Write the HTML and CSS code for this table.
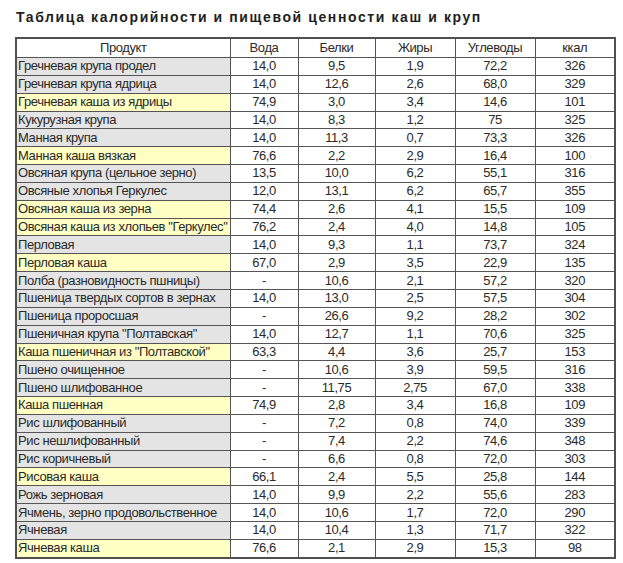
FILE: index.html
```html
<!DOCTYPE html>
<html lang="ru">
<head>
<meta charset="utf-8">
<title>Таблица калорийности</title>
<link rel="stylesheet" href="styles.css">
</head>
<body>
<h1 class="title">Таблица калорийности и пищевой ценности каш и круп</h1>
<table class="grid">
<colgroup>
<col class="c-name"><col class="c-w"><col class="c-p"><col class="c-f"><col class="c-c"><col class="c-k">
</colgroup>
<thead>
<tr><th>Продукт</th><th>Вода</th><th>Белки</th><th>Жиры</th><th>Углеводы</th><th>ккал</th></tr>
</thead>
<tbody>
<tr><td class="name">Гречневая крупа продел</td><td>14,0</td><td>9,5</td><td>1,9</td><td>72,2</td><td>326</td></tr>
<tr><td class="name">Гречневая крупа ядрица</td><td>14,0</td><td>12,6</td><td>2,6</td><td>68,0</td><td>329</td></tr>
<tr><td class="name kasha">Гречневая каша из ядрицы</td><td>74,9</td><td>3,0</td><td>3,4</td><td>14,6</td><td>101</td></tr>
<tr><td class="name">Кукурузная крупа</td><td>14,0</td><td>8,3</td><td>1,2</td><td>75</td><td>325</td></tr>
<tr><td class="name">Манная крупа</td><td>14,0</td><td>11,3</td><td>0,7</td><td>73,3</td><td>326</td></tr>
<tr><td class="name kasha">Манная каша вязкая</td><td>76,6</td><td>2,2</td><td>2,9</td><td>16,4</td><td>100</td></tr>
<tr><td class="name">Овсяная крупа (цельное зерно)</td><td>13,5</td><td>10,0</td><td>6,2</td><td>55,1</td><td>316</td></tr>
<tr><td class="name">Овсяные хлопья Геркулес</td><td>12,0</td><td>13,1</td><td>6,2</td><td>65,7</td><td>355</td></tr>
<tr><td class="name kasha">Овсяная каша из зерна</td><td>74,4</td><td>2,6</td><td>4,1</td><td>15,5</td><td>109</td></tr>
<tr><td class="name kasha">Овсяная каша из хлопьев "Геркулес"</td><td>76,2</td><td>2,4</td><td>4,0</td><td>14,8</td><td>105</td></tr>
<tr><td class="name">Перловая</td><td>14,0</td><td>9,3</td><td>1,1</td><td>73,7</td><td>324</td></tr>
<tr><td class="name kasha">Перловая каша</td><td>67,0</td><td>2,9</td><td>3,5</td><td>22,9</td><td>135</td></tr>
<tr><td class="name">Полба (разновидность пшницы)</td><td>-</td><td>10,6</td><td>2,1</td><td>57,2</td><td>320</td></tr>
<tr><td class="name">Пшеница твердых сортов в зернах</td><td>14,0</td><td>13,0</td><td>2,5</td><td>57,5</td><td>304</td></tr>
<tr><td class="name">Пшеница проросшая</td><td>-</td><td>26,6</td><td>9,2</td><td>28,2</td><td>302</td></tr>
<tr><td class="name">Пшеничная крупа "Полтавская"</td><td>14,0</td><td>12,7</td><td>1,1</td><td>70,6</td><td>325</td></tr>
<tr><td class="name kasha">Каша пшеничная из "Полтавской"</td><td>63,3</td><td>4,4</td><td>3,6</td><td>25,7</td><td>153</td></tr>
<tr><td class="name">Пшено очищенное</td><td>-</td><td>10,6</td><td>3,9</td><td>59,5</td><td>316</td></tr>
<tr><td class="name">Пшено шлифованное</td><td>-</td><td>11,75</td><td>2,75</td><td>67,0</td><td>338</td></tr>
<tr><td class="name kasha">Каша пшенная</td><td>74,9</td><td>2,8</td><td>3,4</td><td>16,8</td><td>109</td></tr>
<tr><td class="name">Рис шлифованный</td><td>-</td><td>7,2</td><td>0,8</td><td>74,0</td><td>339</td></tr>
<tr><td class="name">Рис нешлифованный</td><td>-</td><td>7,4</td><td>2,2</td><td>74,6</td><td>348</td></tr>
<tr><td class="name">Рис коричневый</td><td>-</td><td>6,6</td><td>0,8</td><td>72,0</td><td>303</td></tr>
<tr><td class="name kasha">Рисовая каша</td><td>66,1</td><td>2,4</td><td>5,5</td><td>25,8</td><td>144</td></tr>
<tr><td class="name">Рожь зерновая</td><td>14,0</td><td>9,9</td><td>2,2</td><td>55,6</td><td>283</td></tr>
<tr><td class="name">Ячмень, зерно продовольственное</td><td>14,0</td><td>10,6</td><td>1,7</td><td>72,0</td><td>290</td></tr>
<tr><td class="name">Ячневая</td><td>14,0</td><td>10,4</td><td>1,3</td><td>71,7</td><td>322</td></tr>
<tr><td class="name kasha">Ячневая каша</td><td>76,6</td><td>2,1</td><td>2,9</td><td>15,3</td><td>98</td></tr>
</tbody>
</table>
</body>
</html>
```
FILE: styles.css
```css
html, body {
  margin: 0;
  padding: 0;
  background: #ffffff;
}
body {
  padding: 0 9px 0 15px;
  font-family: "Liberation Sans", Arial, sans-serif;
  color: #2a2a2a;
}
.title {
  margin: 0;
  padding: 9px 0 0 1px;
  height: 27px;
  box-sizing: border-box;
  font-size: 14px;
  font-weight: bold;
  letter-spacing: 1.6px;
  line-height: 16px;
  color: #1e1e1e;
  white-space: nowrap;
}
.grid {
  margin-top: 10px;
  border-collapse: collapse;
  table-layout: fixed;
  width: 599px;
  border: 2px solid #505050;
  font-size: 13px;
  letter-spacing: -0.4px;
}
.c-name { width: 214px; }
.c-w { width: 68px; }
.c-p { width: 77px; }
.c-f { width: 80px; }
.c-c { width: 80px; }
.c-k { width: 80px; }
.grid th, .grid td {
  border: 1px solid #555555;
  padding: 0;
  height: 16.85px;
  line-height: 16px;
  text-align: center;
  font-weight: normal;
  color: #2a2a2a;
  white-space: nowrap;
  overflow: hidden;
}
.grid th {
  height: 18px;
  background: #ffffff;
}
.grid td.name {
  text-align: left;
  padding-left: 1px;
  background: #e4e4e4;
}
.grid td.kasha {
  background: #ffffc4;
}
```
